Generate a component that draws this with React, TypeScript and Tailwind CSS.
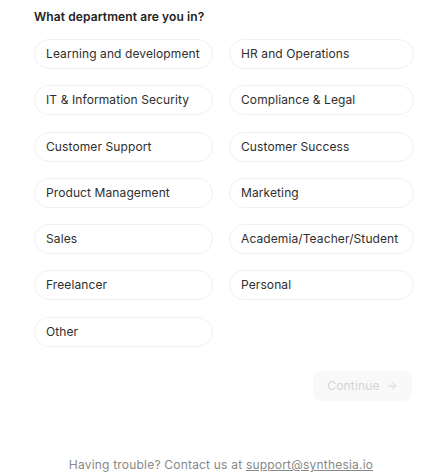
const departments = [
  "Learning and development",
  "HR and Operations",
  "IT & Information Security",
  "Compliance & Legal",
  "Customer Support",
  "Customer Success",
  "Product Management",
  "Marketing",
  "Sales",
  "Academia/Teacher/Student",
  "Freelancer",
  "Personal",
  "Other",
];

export default function App() {
  return (
    <div className="flex min-h-[473px] w-[442px] flex-col bg-white font-['Inter',sans-serif]">
      <div className="w-[414px] pl-[34px] pt-[9px]">
        <h2 className="text-[12px] font-semibold leading-[15px] tracking-[0.1px] text-[#222]">What department are you in?</h2>
        <div className="mt-[15px] grid grid-cols-[179px_185px] gap-x-[16px] gap-y-[16.3px]">
          {departments.map((d) => (
            <button
              key={d}
              className="flex h-[30px] items-center whitespace-nowrap rounded-full border border-[#f0f0f0] bg-white px-[11px] text-left text-[12px] tracking-[0.1px] text-[#2e2e2e]"
            >
              {d}
            </button>
          ))}
        </div>
        <div className="mt-[24px] flex justify-end pr-[2px]">
          <button className="flex h-[30px] w-[99px] items-center justify-center gap-[6px] rounded-[8px] bg-[#f9f9f9] text-[12px] tracking-[0.15px] text-[#d4d4d4]">
            Continue
            <svg width="12" height="12" viewBox="0 0 24 24" fill="none" stroke="currentColor" strokeWidth="2" strokeLinecap="round" strokeLinejoin="round">
              <path d="M5 12h14M13 6l6 6-6 6" />
            </svg>
          </button>
        </div>
      </div>
      <p className="mt-auto pb-[1px] text-center text-[12px] leading-[15px] tracking-[0.2px] text-[#888]">
        Having trouble? Contact us at <a className="underline" href="#">support@synthesia.io</a>
      </p>
    </div>
  );
}
